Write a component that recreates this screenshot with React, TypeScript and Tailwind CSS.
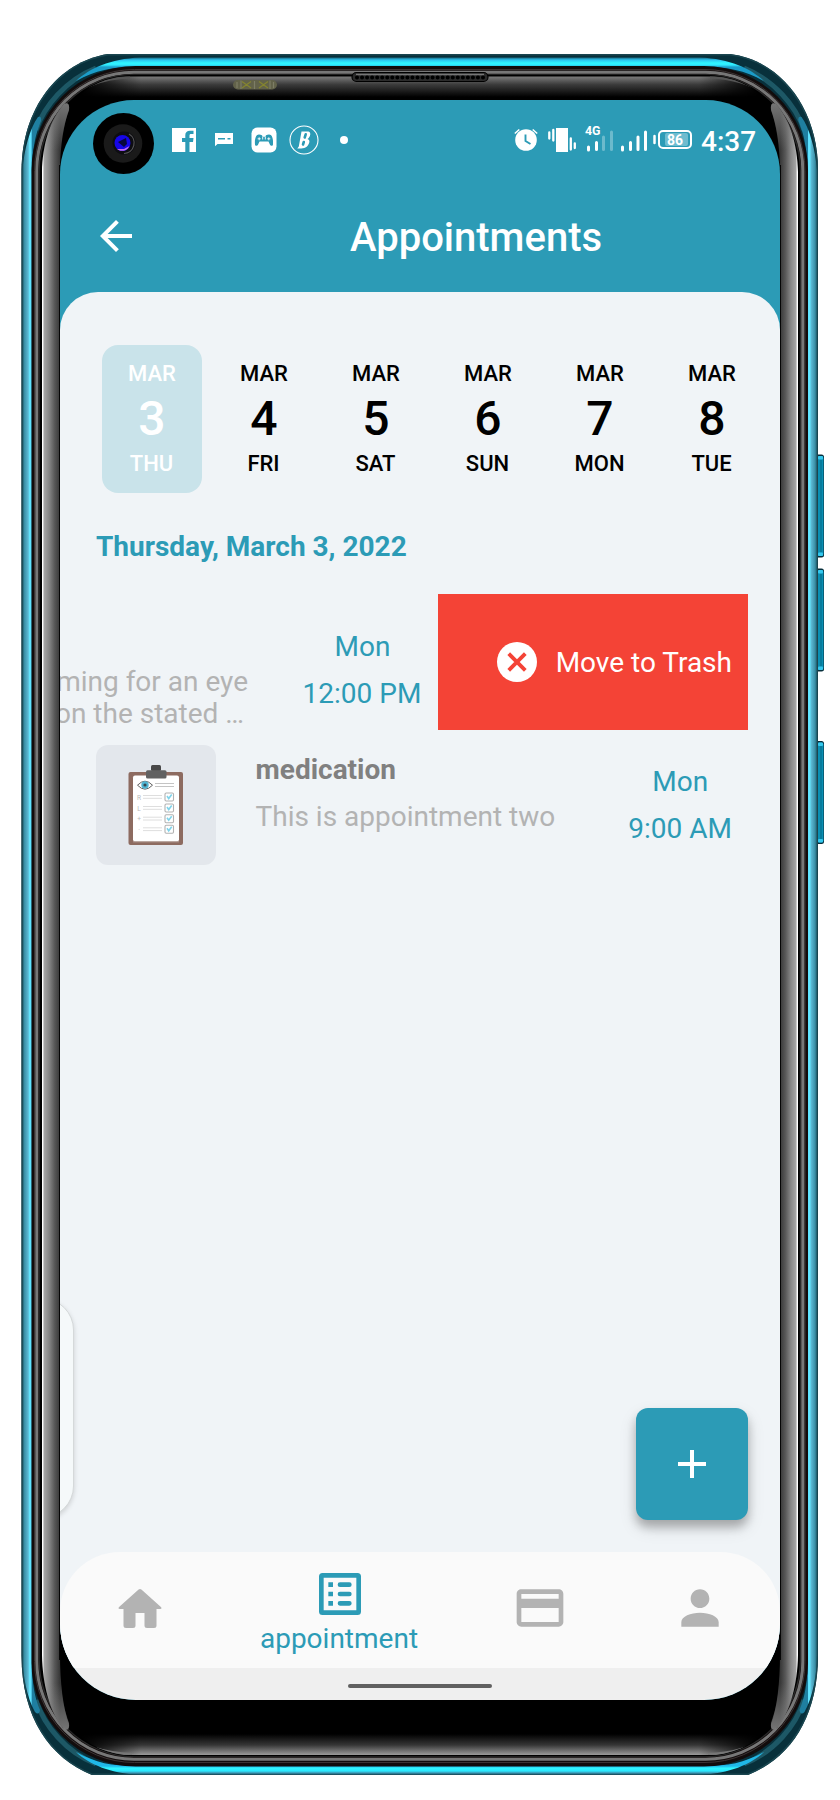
import React from "react";

type Day = { num: string; name: string; active?: boolean };

const days: Day[] = [
  { num: "3", name: "THU", active: true },
  { num: "4", name: "FRI" },
  { num: "5", name: "SAT" },
  { num: "6", name: "SUN" },
  { num: "7", name: "MON" },
  { num: "8", name: "TUE" },
];

function SideButton({ y }: { y: number }) {
  return (
    <g>
      <rect x="815" y={y} width="9" height="103" rx="2.5" fill="#062f3c" />
      <rect x="817" y={y + 1.5} width="6.5" height="100" rx="2" fill="#0a8fb3" />
      <rect x="820" y={y + 5} width="2" height="93" fill="#046a88" opacity="0.5" />
      <rect x="818" y={y + 1.5} width="5" height="3.5" rx="1" fill="#35c9ef" />
      <rect x="818" y={y + 98} width="5" height="3.5" rx="1" fill="#35c9ef" />
    </g>
  );
}

function PhoneFrame() {
  return (
    <svg className="absolute inset-0" width="840" height="1800" viewBox="0 0 840 1800">
      <defs>
        <linearGradient id="gloss" x1="42" x2="60" y1="0" y2="0" gradientUnits="userSpaceOnUse">
          <stop offset="0" stopColor="#fff" />
          <stop offset="0.06" stopColor="#fff" />
          <stop offset="0.1" stopColor="#a8a8a8" />
          <stop offset="0.4" stopColor="#868686" />
          <stop offset="0.7" stopColor="#585858" />
          <stop offset="1" stopColor="#363636" />
        </linearGradient>
        <linearGradient id="tip" x1="0" x2="0" y1="100" y2="150" gradientUnits="userSpaceOnUse">
          <stop offset="0" stopColor="#8a8a8a" stopOpacity="0.8" />
          <stop offset="1" stopColor="#8a8a8a" stopOpacity="0" />
        </linearGradient>
        <linearGradient id="topFade" x1="0" x2="0" y1="76" y2="97" gradientUnits="userSpaceOnUse">
          <stop offset="0" stopColor="#808080" />
          <stop offset="0.4" stopColor="#3c3c3c" />
          <stop offset="1" stopColor="#000" />
        </linearGradient>
        <linearGradient id="bottomFade" x1="0" x2="0" y1="1734" y2="1756" gradientUnits="userSpaceOnUse">
          <stop offset="0" stopColor="#000" />
          <stop offset="0.5" stopColor="#363636" />
          <stop offset="1" stopColor="#a5a5a5" />
        </linearGradient>
        <linearGradient id="edgeFade" x1="80" x2="760" y1="0" y2="0" gradientUnits="userSpaceOnUse">
          <stop offset="0" stopColor="#000" />
          <stop offset="0.09" stopColor="#fff" />
          <stop offset="0.91" stopColor="#fff" />
          <stop offset="1" stopColor="#000" />
        </linearGradient>
        <mask id="ends" maskUnits="userSpaceOnUse" x="0" y="0" width="840" height="1800">
          <rect x="0" y="0" width="840" height="1800" fill="url(#edgeFade)" />
        </mask>
        <linearGradient id="rimSide" x1="22.500" x2="32" y1="0" y2="0" gradientUnits="userSpaceOnUse">
          <stop offset="0" stopColor="#1c5563" />
          <stop offset="0.2" stopColor="#3a8fa6" />
          <stop offset="0.6" stopColor="#5bb9d4" />
          <stop offset="0.75" stopColor="#62e8ff" />
          <stop offset="0.92" stopColor="#5fe0ff" />
          <stop offset="1" stopColor="#1f7fa0" />
        </linearGradient>
        <linearGradient id="rimTop" x1="0" x2="0" y1="57" y2="67" gradientUnits="userSpaceOnUse">
          <stop offset="0" stopColor="#15566a" />
          <stop offset="0.3" stopColor="#2bc4f0" />
          <stop offset="0.6" stopColor="#30f6ff" />
          <stop offset="0.8" stopColor="#30eaff" />
          <stop offset="1" stopColor="#1b9cc8" />
        </linearGradient>
        <linearGradient id="rimBottom" x1="0" x2="0" y1="1766" y2="1775" gradientUnits="userSpaceOnUse">
          <stop offset="0" stopColor="#20b8e8" />
          <stop offset="0.25" stopColor="#30f6ff" />
          <stop offset="0.55" stopColor="#2be8ff" />
          <stop offset="0.75" stopColor="#3a9cba" />
          <stop offset="1" stopColor="#123f4c" />
        </linearGradient>
        <clipPath id="body">
          <path d="M21.500 170C22 108 58 62 108 54H730C780 60 818 108 818 170V1655C818 1718 790 1758 748 1775H92C50 1758 21.500 1718 21.500 1655Z" />
        </clipPath>
        <clipPath id="innerGlass">
          <rect x="41.500" y="75.500" width="757" height="1680" rx="93" ry="96" />
        </clipPath>
      </defs>
      <SideButton y={454.5} />
      <SideButton y={568.5} />
      <SideButton y={741} />
      <g clipPath="url(#body)">
        <rect x="0" y="0" width="840" height="1800" fill="#08303b" />
        <path
          d="M21.500 170C22 108 58 62 108 54H730C780 60 818 108 818 170V1655C818 1718 790 1758 748 1775H92C50 1758 21.500 1718 21.500 1655Z"
          fill="none"
          stroke="#1a4650"
          strokeWidth="3"
        />
        <path d="M36 130C44 106 66 80 96 68M744 68C774 80 796 106 804 130M36 1700C44 1726 66 1752 96 1764M744 1764C774 1752 796 1726 804 1700" fill="none" stroke="#1d5866" strokeWidth="5" />
        <g id="sideRim">
          <path
            d="M22.500 170C24 150 30 128 38 117Q42 116 41 121C36 133 32 148 32 175V1660C32 1685 35 1698 40 1710Q39 1716 35 1712C27 1698 22.500 1675 22.500 1655Z"
            fill="url(#rimSide)"
          />
        </g>
        <use href="#sideRim" transform="translate(839.5 0) scale(-1 1)" />
        <path d="M76 81C90 68 110 59 140 57.500H700C730 59 750 68 764 81C744 70 728 67 704 67H135C112 67 96 70 76 81Z" fill="url(#rimTop)" />
        <path d="M76 1752C90 1765 110 1773 140 1775H700C730 1773 750 1765 764 1752C744 1763 728 1766 704 1766H135C112 1766 96 1763 76 1752Z" fill="url(#rimBottom)" />
      </g>
      <rect x="31.500" y="66" width="776.500" height="1700.500" rx="104" ry="104" fill="#120c0c" />
      <rect x="34.500" y="69.500" width="770.500" height="1693" rx="100" ry="101" fill="none" stroke="#3c3434" strokeWidth="1" />
      <rect x="36.800" y="72.200" width="766" height="1687" rx="97" ry="98" fill="none" stroke="#777" strokeWidth="3" />
      <rect x="38.500" y="74" width="762.500" height="1683" rx="95" ry="97" fill="#2a2a2a" />
      <rect x="40.500" y="75.500" width="758.500" height="1680" rx="94" ry="96" fill="#000" stroke="#000" strokeWidth="1.500" />
      <g clipPath="url(#innerGlass)">
        <g mask="url(#ends)">
          <rect x="60" y="76.500" width="720" height="22" fill="url(#topFade)" />
          <rect x="60" y="1734" width="720" height="21" fill="url(#bottomFade)" />
        </g>
        <path d="M66 102C82 86 104 78.500 130 77.500M710 77.500C736 78.500 758 86 774 102" fill="none" stroke="#555" strokeWidth="2" />
        <path d="M68 1733C84 1747 106 1753 132 1754M708 1754C734 1753 756 1747 772 1733" fill="none" stroke="#777" strokeWidth="2" />
      </g>
      <g id="sideGloss">
        <path d="M42 172C42.500 145 50 119 64 104Q70 101 69 110C64 124 60 145 60 172V1655C60 1682 63 1708 69 1725Q69 1732 63 1728C50 1712 42.500 1685 42 1655Z" fill="url(#gloss)" />
        <path id="tipShine" d="M45 150C48 131 54 115 64 104Q70 101 69 110C65 121 62 134 61 150Z" fill="url(#tip)" />
        <use href="#tipShine" transform="translate(0 1833) scale(1 -1)" />
        <path d="M59.500 165V1660" stroke="#050505" strokeWidth="1" />
      </g>
      <use href="#sideGloss" transform="translate(840 0) scale(-1 1)" />
      <rect x="352" y="72.500" width="136" height="9" rx="4.500" fill="#2b2b2b" stroke="#000" strokeWidth="1.200" />
      <path d="M356 74.500H484" stroke="#777" strokeWidth="1.500" />
      <path d="M357 77.500H486" stroke="#000" strokeWidth="4" strokeDasharray="0.010 5.030" strokeLinecap="round" />
      <rect x="233" y="80" width="44" height="9.500" rx="4.750" fill="#62624a" />
      <path d="M237 82V88M241 80.500V89M254.500 81V89M270 80.500V89M273.500 82V88" stroke="#7d7d66" strokeWidth="1.200" />
      <path d="M242 81.500L251 88M251 81.500L242 88M259 81.500L268 88M268 81.500L259 88" stroke="#85852f" strokeWidth="1.200" />
    </svg>
  );
}

function CameraLens() {
  return (
    <svg className="absolute left-[33px] top-[13px]" width="61" height="61" viewBox="0 0 61 61">
      <circle cx="30.500" cy="30.500" r="30.500" fill="#000" />
      <circle cx="30" cy="30.500" r="19.300" fill="#1a1a1a" />
      <circle cx="31" cy="30" r="11.500" fill="#0d0d12" />
      <path d="M36 21A10.500 10.500 0 0 1 31 40.500" fill="none" stroke="#555" strokeWidth="1.200" />
      <circle cx="29.500" cy="30" r="8" fill="#1606e8" />
      <path d="M24 36A8 8 0 0 0 36.500 33L31 36Z" fill="#c06cf0" />
      <path d="M25 29L33 25L34 31L31 34Z" fill="#07073c" />
    </svg>
  );
}

function StatusLeft() {
  return (
    <svg width="180" height="32" viewBox="170 124 180 32">
      <path d="M172 128h24v24h-6.500v-10h3.500l.5-4h-4v-2.300c0-1.300.5-1.700 2-1.700h2v-3.200h-3.500c-3 0-4.700 1.700-4.700 4.500v2.700h-3.300v4h3.300v10h-13.300z" fill="#fff" />
      <path d="M215 133h18v11h-15.500l-2.500 2.300z" fill="#fff" />
      <path d="M218 138.700h7M227.500 138.700h3" stroke="#2c9bb6" strokeWidth="1.500" />
      <rect x="251.500" y="127.500" width="25" height="25" rx="6" fill="#fff" />
      <path d="M255 144.500c-.5-5 .6-10 4-10 2.300 0 3.200.8 3.800 2.200h2.400c.6-1.400 1.500-2.200 3.800-2.200 3.400 0 4.500 5 4 10-.2 2-2.300 1.500-3 .2l-1.500-3.200h-9l-1.500 3.200c-.7 1.300-2.800 1.800-3-.2z" fill="#2c9bb6" />
      <path d="M257.700 138.800h3M259.200 137.300v3M267.300 138.800h3M268.800 137.300v3M262.700 136.500v3M265.300 136.500v3" stroke="#fff" strokeWidth="0.900" />
      <circle cx="304" cy="140" r="14" fill="none" stroke="#fff" strokeWidth="1.100" />
      <path d="M301.500 131.500h7c3 .8 2 5.500-1 7.500 2.700 1 2.300 4 .3 6.500-1.500 2.500-4.500 3-10.500 3l1.500-2z" fill="#fff" />
      <path d="M305.700 134.300l-1 3.200M303.800 142l-.8 2.500" stroke="#2c9bb6" strokeWidth="2.600" strokeLinecap="round" />
      <circle cx="344" cy="140" r="4" fill="#fff" />
    </svg>
  );
}

function StatusRight() {
  return (
    <svg className="overflow-visible" width="180" height="32" viewBox="512 124 180 32" fontFamily="Roboto, sans-serif">
      <circle cx="526" cy="140" r="10.800" fill="#fff" />
      <path d="M514.800 133.500l4.500-4M537.200 133.500l-4.500-4" stroke="#fff" strokeWidth="1.600" />
      <path d="M525.500 134.500v6.500l5 3" fill="none" stroke="#2c9bb6" strokeWidth="1.900" />
      <rect x="556" y="128" width="12" height="24" fill="#fff" />
      <path d="M549.300 132.500v6M553.300 130v10.500M570.800 138.500v11M574.800 143.500v4.500" stroke="#fff" strokeWidth="2.300" strokeLinecap="round" />
      <text x="585" y="134.800" fontSize="13.500" fontWeight="700" fill="#fff" textLength="15.500" lengthAdjust="spacingAndGlyphs">4G</text>
      <path d="M588.500 147v3M596.500 142.500v7" stroke="#fff" strokeWidth="3" strokeLinecap="round" />
      <path d="M603.500 137v12.500M611.500 132v17.500" stroke="#6cbacc" strokeWidth="3" strokeLinecap="round" />
      <path d="M622.500 147v3M630.500 142.500v7M638 137v12.500M645.500 132v17.500" stroke="#fff" strokeWidth="3" strokeLinecap="round" />
      <path d="M654.500 136v7" stroke="#fff" strokeWidth="2.500" strokeLinecap="round" />
      <rect x="659" y="131" width="32" height="17" rx="4" fill="none" stroke="#fff" strokeWidth="2" />
      <rect x="665" y="133" width="23" height="13" rx="2" fill="#6fbccf" />
      <text x="667" y="145" fontSize="15.500" fontWeight="700" fill="#fff" textLength="16" lengthAdjust="spacingAndGlyphs">86</text>
    </svg>
  );
}

function ClipboardArt() {
  const rows = [797, 808, 818.7, 829.3];
  return (
    <svg width="120" height="120" viewBox="96 745 120 120" fontFamily="Roboto, sans-serif">
      <rect x="128.500" y="772" width="54.500" height="73" rx="2" fill="#8d6b60" />
      <rect x="133" y="775.500" width="46" height="66" rx="2" fill="#fff" />
      <path d="M133 841.800h46" stroke="#b5a19b" strokeWidth="1" />
      <rect x="151" y="765" width="10" height="6" rx="1.500" fill="#484848" />
      <rect x="146" y="770.300" width="20.500" height="8.200" rx="1.500" fill="#616161" />
      <path d="M137.500 785.200q7.500-8 15 0q-7.500 8-15 0z" fill="#fff" stroke="#616161" strokeWidth="1" />
      <circle cx="145" cy="785" r="3.700" fill="#4fb4d2" />
      <circle cx="145" cy="785" r="1.600" fill="#37474f" />
      <path d="M155 783.500h19M155 786.500h19" stroke="#bdbdbd" strokeWidth="0.900" />
      {rows.map((y, i) => (
        <g key={y}>
          <text x="139" y={y + 2.500} fontSize="6.500" fill="#bbb" textAnchor="middle">{["R", "L", "+", "·"][i]}</text>
          <path d={`M143 ${y - 1.500}h19M143 ${y + 1.300}h19`} stroke="#dedede" strokeWidth="1" />
          <rect x="165" y={y - 4} width="8.500" height="8" rx="1.200" fill="#fff" stroke="#b2b2b2" strokeWidth="1.100" />
          <path d={`M167 ${y - 1}l1.700 2.500l3-4`} fill="none" stroke="#7fd3ea" strokeWidth="1.600" />
        </g>
      ))}
    </svg>
  );
}

function Nav() {
  return (
    <nav className="flex h-[116px] shrink-0 items-center rounded-t-[60px] bg-[#fafafa] text-[#b3b3b3]">
      <div className="flex w-[160px] justify-center pb-[6px]">
        <svg width="48" height="48" viewBox="116 1582 48 48">
          <path d="M138.600 1588.600q1.400-1.200 2.800 0l19.800 17.700q1 1.700-.8 1.700h-3.900v16.500q0 2.500-2.500 2.500h-7q-2.500 0-2.500-2.500v-12.500h-9v12.500q0 2.500-2.500 2.500h-7q-2.500 0-2.500-2.500v-16.500h-3.900q-1.800 0-.8-1.700z" fill="currentColor" />
        </svg>
      </div>
      <div className="flex w-[240px] flex-col items-center text-[#2c9bb6]">
        <svg width="56" height="56" viewBox="0 0 24 24">
          <path d="M19.500 3h-15A1.500 1.500 0 0 0 3 4.500v15A1.500 1.500 0 0 0 4.500 21h15a1.500 1.500 0 0 0 1.500-1.500v-15A1.500 1.500 0 0 0 19.500 3zM19 19H5V5h14z" fill="currentColor" />
          <path d="M7 7h2v2H7zM7 11h2v2H7zM7 15h2v2H7z" fill="currentColor" />
          <path d="M12 8h4M12 12h4M12 16h4" stroke="currentColor" strokeWidth="2" strokeLinecap="round" />
        </svg>
        <span className="mt-px pr-[2px] text-[28px] leading-[32px]">appointment</span>
      </div>
      <div className="flex w-[160px] justify-center pb-1">
        <svg width="56" height="56" viewBox="0 0 24 24">
          <path d="M20 4H4c-1.110 0-2 .890-2 2v12c0 1.110.890 2 2 2h16c1.110 0 2-.890 2-2V6c0-1.110-.890-2-2-2zm0 14H4v-6h16v6zm0-10H4V6h16v2z" fill="currentColor" />
        </svg>
      </div>
      <div className="flex w-[160px] justify-center pb-1">
        <svg width="56" height="56" viewBox="0 0 24 24">
          <path d="M12 12c2.210 0 4-1.790 4-4s-1.790-4-4-4-4 1.790-4 4 1.790 4 4 4zm0 2c-4 0-8 1.600-8 4v2h16v-2c0-2.400-4-4-8-4z" fill="currentColor" />
        </svg>
      </div>
    </nav>
  );
}

export default function App() {
  return (
    <div className="relative h-[1800px] w-[840px] overflow-hidden bg-white px-[60px] pt-[100px] font-['Roboto',sans-serif]">
      <PhoneFrame />
      <div className="relative flex h-[1600px] w-[720px] flex-col overflow-hidden rounded-t-[74px] rounded-b-[76px] bg-[#2c9bb6]">
        <CameraLens />
        <div className="flex h-[80px] shrink-0 items-center pl-[110px] pr-6 text-white">
          <StatusLeft />
          <div className="ml-auto flex items-center gap-[9px]">
            <StatusRight />
            <span className="w-[55px] whitespace-nowrap pt-[3px] text-[28px] font-medium leading-8">4:37</span>
          </div>
        </div>
        <header className="flex h-[112px] shrink-0 items-center text-white">
          <svg className="ml-8" width="48" height="48" viewBox="0 0 24 24">
            <path d="M20 11H7.830l5.590-5.590L12 4l-8 8 8 8 1.410-1.410L7.830 13H20v-2z" fill="currentColor" />
          </svg>
          <h1 className="ml-[210px] pt-1 text-[40px] font-medium leading-[48px]">Appointments</h1>
        </header>
        <main className="relative flex min-h-0 flex-1 flex-col rounded-t-[38px] bg-[#f0f4f7]">
          <div className="mt-[53px] flex gap-3 pl-[42px]">
            {days.map((d) => (
              <div
                key={d.num}
                className={
                  d.active
                    ? "flex h-[148px] w-[100px] shrink-0 flex-col items-center rounded-[16px] bg-[#c9e3ea] pt-4 font-medium text-white"
                    : "flex h-[148px] w-[100px] shrink-0 flex-col items-center pt-4 font-medium text-black"
                }
              >
                <span className="text-[22px] leading-[26px]">MAR</span>
                <span className="mt-1 text-[48px] leading-[56px]">{d.num}</span>
                <span className="mt-1 pr-px text-[22px] leading-[26px]">{d.name}</span>
              </div>
            ))}
          </div>
          <h2 className="ml-9 mt-[38px] text-[28px] font-bold leading-8 text-[#2c9bb6]">Thursday, March 3, 2022</h2>
          <section className="mt-[31px] flex h-[136px] justify-end pr-8 text-[28px]">
            <div className="flex w-[188px] shrink-0 flex-col items-end whitespace-nowrap pt-[72px] leading-8 text-[#b3b3b3]">
              <span>coming for an eye</span>
              <span className="pr-1">test on the stated …</span>
            </div>
            <div className="ml-[52px] flex w-[124px] shrink-0 flex-col items-center whitespace-nowrap pt-[37px] leading-8 text-[#2c9bb6]">
              <span className="pl-px">Mon</span>
              <span className="mt-[15px]">12:00 PM</span>
            </div>
            <div className="ml-[14px] flex h-[135.5px] w-[310px] shrink-0 items-center justify-end bg-[#f44336] pr-4 text-white">
              <svg width="40" height="40" viewBox="0 0 40 40">
                <circle cx="20" cy="20" r="20" fill="#fff" />
                <path d="M11.700 11.700L28.300 28.300M28.300 11.700L11.700 28.300" stroke="#f44336" strokeWidth="3.800" />
              </svg>
              <span className="ml-[19px] whitespace-nowrap pt-[2px]">Move to Trash</span>
            </div>
          </section>
          <section className="mt-[15px] flex h-[120px] pl-9 pr-12 text-[28px] leading-8">
            <div className="h-[120px] w-[120px] shrink-0 rounded-[12px] bg-[#e3e7ec]">
              <ClipboardArt />
            </div>
            <div className="ml-[39.5px] flex flex-col whitespace-nowrap pt-[9px]">
              <span className="font-bold text-[#808080]">medication</span>
              <span className="mt-[15px] text-[#b3b3b3]">This is appointment two</span>
            </div>
            <div className="ml-auto flex flex-col items-center whitespace-nowrap pt-[21px] text-[#2c9bb6]">
              <span>Mon</span>
              <span className="mt-[15px]">9:00 AM</span>
            </div>
          </section>
          <div className="absolute -left-[86px] top-[1006px] h-[220px] w-[100px] rounded-[32px] border border-[#d5d9da] bg-[#f5f9fa] shadow-[0_2px_5px_rgba(0,0,0,0.15)]" />
          <button className="absolute left-[576px] top-[1116px] flex h-[112px] w-[112px] items-center justify-center rounded-[12px] bg-[#2c9bb6] shadow-[0_7px_10px_rgba(0,0,0,0.24),0_8px_18px_rgba(0,0,0,0.12)]">
            <svg width="28" height="28" viewBox="0 0 28 28">
              <path d="M14 0V28M0 14H28" stroke="#fff" strokeWidth="4" />
            </svg>
          </button>
          <div className="mt-auto">
            <Nav />
          </div>
        </main>
        <div className="flex h-8 shrink-0 items-center justify-center bg-[#efefef] pt-1">
          <div className="h-1 w-[144px] rounded-full bg-[#606060]" />
        </div>
      </div>
    </div>
  );
}
